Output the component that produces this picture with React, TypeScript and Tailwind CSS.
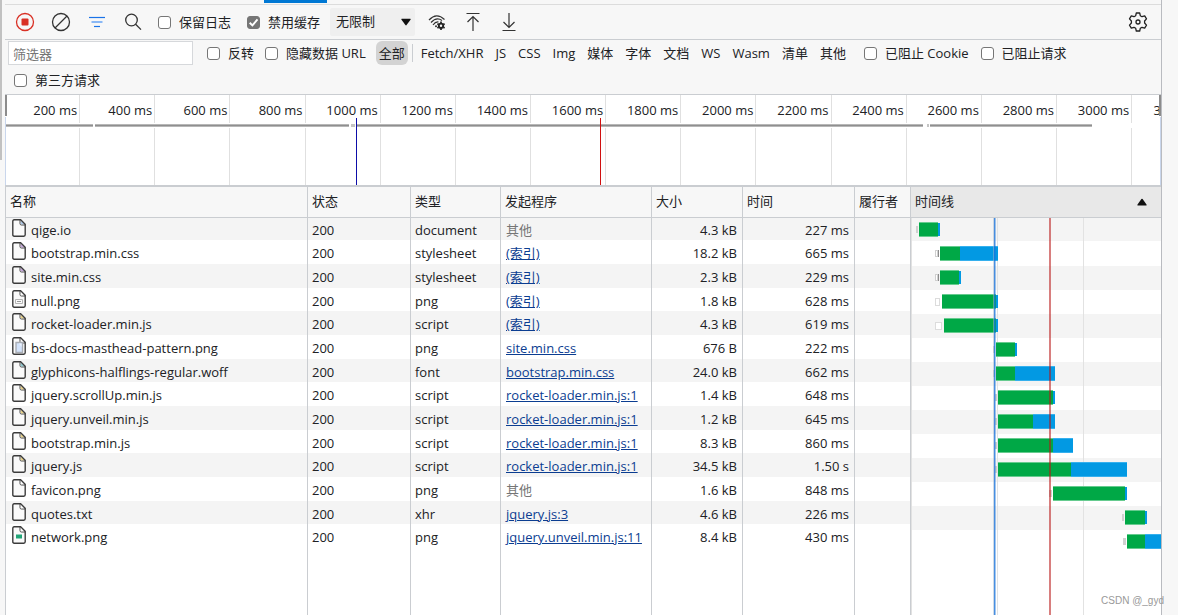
import type { ReactNode } from 'react';

type FileKind = 'document' | 'stylesheet' | 'script' | 'font' | 'other' | 'blank-image' | 'pattern-image' | 'chart-image';

interface NetworkRequest {
  name: string;
  icon: FileKind;
  type: string;
  initiator: string;
  size: string;
  time: string;
}

const requests: NetworkRequest[] = [
  { name: 'qige.io',                           icon: 'document',      type: 'document',   initiator: '其他',                   size: '4.3 kB',  time: '227 ms' },
  { name: 'bootstrap.min.css',                 icon: 'stylesheet',    type: 'stylesheet', initiator: '(索引)',                 size: '18.2 kB', time: '665 ms' },
  { name: 'site.min.css',                      icon: 'stylesheet',    type: 'stylesheet', initiator: '(索引)',                 size: '2.3 kB',  time: '229 ms' },
  { name: 'null.png',                          icon: 'blank-image',   type: 'png',        initiator: '(索引)',                 size: '1.8 kB',  time: '628 ms' },
  { name: 'rocket-loader.min.js',              icon: 'script',        type: 'script',     initiator: '(索引)',                 size: '4.3 kB',  time: '619 ms' },
  { name: 'bs-docs-masthead-pattern.png',      icon: 'pattern-image', type: 'png',        initiator: 'site.min.css',           size: '676 B',   time: '222 ms' },
  { name: 'glyphicons-halflings-regular.woff', icon: 'font',          type: 'font',       initiator: 'bootstrap.min.css',      size: '24.0 kB', time: '662 ms' },
  { name: 'jquery.scrollUp.min.js',            icon: 'script',        type: 'script',     initiator: 'rocket-loader.min.js:1', size: '1.4 kB',  time: '648 ms' },
  { name: 'jquery.unveil.min.js',              icon: 'script',        type: 'script',     initiator: 'rocket-loader.min.js:1', size: '1.2 kB',  time: '645 ms' },
  { name: 'bootstrap.min.js',                  icon: 'script',        type: 'script',     initiator: 'rocket-loader.min.js:1', size: '8.3 kB',  time: '860 ms' },
  { name: 'jquery.js',                         icon: 'script',        type: 'script',     initiator: 'rocket-loader.min.js:1', size: '34.5 kB', time: '1.50 s' },
  { name: 'favicon.png',                       icon: 'other',         type: 'png',        initiator: '其他',                   size: '1.6 kB',  time: '848 ms' },
  { name: 'quotes.txt',                        icon: 'other',         type: 'xhr',        initiator: 'jquery.js:3',            size: '4.6 kB',  time: '226 ms' },
  { name: 'network.png',                       icon: 'chart-image',   type: 'png',        initiator: 'jquery.unveil.min.js:11', size: '8.4 kB', time: '430 ms' },
];

// queue start, waiting start, download start, end
const bars = [
  [5, 8, 27, 29],
  [24, 29, 49, 87],
  [24, 29, 48, 50],
  [24, 31, 85, 87],
  [24, 33, 85, 87],
  [82, 85, 104, 106],
  [82, 85, 104, 144],
  [84, 87, 142, 144],
  [84, 87, 122, 144],
  [84, 87, 142, 162],
  [84, 87, 160, 216],
  [138, 142, 214, 216],
  [211, 214, 234, 236],
  [212, 216, 234, 250],
];

const ticks = [200, 400, 600, 800, 1000, 1200, 1400, 1600, 1800, 2000, 2200, 2400, 2600, 2800, 3000];

const filterTypes = ['Fetch/XHR', 'JS', 'CSS', 'Img', '媒体', '字体', '文档', 'WS', 'Wasm', '清单', '其他'];

const foldColors: Record<FileKind, string> = {
  document: '#7aa7dc',
  stylesheet: '#a36bc9',
  script: '#e0b93a',
  font: '#3fa9b5',
  other: '#ffffff',
  'blank-image': '#ffffff',
  'pattern-image': '#ffffff',
  'chart-image': '#ffffff',
};

function FileIcon({ kind }: { kind: FileKind }) {
  return (
    <svg width="14" height="18" viewBox="0 0 14 18" fill="none" className="shrink-0">
      <path d="M2.2.8H8.6L13.2 5.4V15.8Q13.2 17.2 11.8 17.2H2.2Q.8 17.2 .8 15.8V2.2Q.8.8 2.2.8Z" fill="#fafafa" stroke="#3c3c3c" strokeWidth="1.4" />
      <path d="M8 1V4.6Q8 6 9.4 6H13" stroke="#4a4a4a" strokeWidth="1" />
      <path d="M8.8 2V5.2H12Z" fill={foldColors[kind]} fillOpacity="0.6" />
      {kind === 'blank-image' && (
        <>
          <path d="M3.5 9.5H10.5V13.5H3.5Z" stroke="#b5b5b5" />
          <path d="M5 11.5H9" stroke="#999" />
        </>
      )}
      {kind === 'pattern-image' && (
        <>
          <path d="M4 5.5H10.5V15.5H4Z" fill="#d3e3fb" stroke="#a9adb4" strokeWidth="1.4" />
          <path d="M7 6.5L9.5 10V6.5Z" fill="#eef4fd" />
        </>
      )}
      {kind === 'chart-image' && <path d="M4 8.5H10V12.5H4Z" fill="#22a578" />}
    </svg>
  );
}

function IconButton({ label, width, children }: { label: string; width: string; children: ReactNode }) {
  return (
    <button type="button" aria-label={label} className={`flex h-7 shrink-0 items-center justify-center ${width}`}>
      {children}
    </button>
  );
}

function Checkbox({ label, checked = false }: { label: string; checked?: boolean }) {
  return (
    <label className="flex shrink-0 items-center gap-2 whitespace-nowrap">
      <span className="relative flex size-[13px]">
        <input
          type="checkbox"
          defaultChecked={checked}
          className="peer size-[13px] appearance-none rounded-[3px] border border-[#767676] bg-white checked:bg-[#767676]"
        />
        <svg viewBox="0 0 12 12" className="pointer-events-none absolute inset-0 hidden size-[13px] peer-checked:block" fill="none">
          <path d="M2.5 6.2L5 8.7L9.7 3.2" stroke="#fff" strokeWidth="1.8" />
        </svg>
      </span>
      <span className="pt-0.5">{label}</span>
    </label>
  );
}

function Toolbar() {
  return (
    <div className="flex h-[35px] items-center border-b border-[#cacdd1] pr-3 pl-0.5">
      <IconButton label="停止记录" width="w-9">
        <svg width="20" height="20" viewBox="0 0 20 20" fill="none">
          <circle cx="10" cy="10" r="8.5" stroke="#d93025" strokeWidth="1.3" />
          <rect x="6.5" y="6.5" width="7" height="7" rx="1" fill="#d93025" />
        </svg>
      </IconButton>
      <IconButton label="清除" width="w-9">
        <svg width="20" height="20" viewBox="0 0 20 20" fill="none" stroke="#333" strokeWidth="1.3">
          <circle cx="10" cy="10" r="8.5" />
          <path d="M4 16L16 4" />
        </svg>
      </IconButton>
      <IconButton label="筛选" width="w-9">
        <svg width="18" height="14" viewBox="0 0 18 14" fill="none">
          <path d="M1 2.5H17" stroke="#1a73e8" strokeWidth="1.2" />
          <path d="M3.5 7H14.5" stroke="#8ab8f5" strokeWidth="2" />
          <path d="M6 11.5H12" stroke="#1a73e8" strokeWidth="1.2" />
        </svg>
      </IconButton>
      <IconButton label="搜索" width="w-9">
        <svg width="18" height="18" viewBox="0 0 18 18" fill="none" stroke="#333" strokeWidth="1.3">
          <circle cx="7.5" cy="7" r="5.8" />
          <path d="M11.6 11.2L17 16.6" />
        </svg>
      </IconButton>
      <div className="flex items-center gap-4 pl-[7px]">
        <Checkbox label="保留日志" />
        <Checkbox label="禁用缓存" checked />
      </div>
      <div className="relative ml-2.5">
        <select aria-label="网络限制" className="h-7 w-[85px] appearance-none rounded-xs bg-[#efefef] pr-6 pl-1.5">
          <option>无限制</option>
        </select>
        <svg width="10" height="8" viewBox="0 0 10 8" className="pointer-events-none absolute top-2.5 right-1">
          <path d="M.8.8H9.2Q10 .8 9.5 1.7L5.6 7Q5 7.8 4.4 7L.5 1.7Q0 .8 .8.8Z" fill="#111" />
        </svg>
      </div>
      <div className="flex items-center pl-1">
        <IconButton label="网络条件" width="w-9">
          <svg width="18" height="18" viewBox="0 0 18 18" fill="none" stroke="#333" strokeWidth="1.2">
            <path d="M1 7Q8.5 -1 16.5 6.5" />
            <path d="M3 9.5Q8.5 3.5 14 7.5" />
            <path d="M5 12Q7.5 8.5 10.5 9" />
            <circle cx="8" cy="13.3" r="1" fill="#333" stroke="none" />
            <circle cx="13" cy="12.8" r="2.2" strokeWidth="1.9" stroke="#222" />
            <path d="M13 8.6V10M13 15.6V17M9.4 10.7L10.6 11.4M15.4 14.2L16.6 14.9M16.6 10.7L15.4 11.4M10.6 14.2L9.4 14.9" strokeWidth="1.7" stroke="#222" />
          </svg>
        </IconButton>
        <IconButton label="导入 HAR 文件" width="w-9">
          <svg width="16" height="20" viewBox="0 0 16 20" fill="none" stroke="#333" strokeWidth="1.2">
            <path d="M1.5 1.5H14.5M8 19V4.5M2.5 10L8 4.5L13.5 10" />
          </svg>
        </IconButton>
        <IconButton label="导出 HAR" width="w-9">
          <svg width="16" height="20" viewBox="0 0 16 20" fill="none" stroke="#333" strokeWidth="1.2">
            <path d="M1.5 18.5H14.5M8 1V15.5M2.5 10L8 15.5L13.5 10" />
          </svg>
        </IconButton>
      </div>
      <div className="ml-auto">
        <IconButton label="网络设置" width="w-[22px]">
          <svg width="20" height="20" viewBox="0 0 20 20" fill="none" stroke="#222" strokeWidth="1.3" strokeLinejoin="round">
            <path d="M8.3 1H11.7L12.3 3.7L14 4.7L16.7 3.9L18.5 6.9L16.6 9V11L18.5 13.1L16.7 16.1L14 15.3L12.3 16.3L11.7 19H8.3L7.7 16.3L6 15.3L3.3 16.1L1.5 13.1L3.4 11V9L1.5 6.9L3.3 3.9L6 4.7L7.7 3.7Z" />
            <circle cx="10" cy="10" r="2" />
          </svg>
        </IconButton>
      </div>
    </div>
  );
}

function FilterBar() {
  return (
    <div className="flex min-h-[54px] flex-wrap items-center gap-x-3 px-[3px]">
      <input
        type="text"
        aria-label="筛选器"
        placeholder="筛选器"
        className="h-6 w-[185px] border border-[#d6d8db] bg-white px-1 pt-0.5 placeholder:text-[#757575]"
      />
      <div className="flex items-center gap-[11px] pl-0.5">
        <Checkbox label="反转" />
        <Checkbox label="隐藏数据 URL" />
      </div>
      <div className="flex items-center">
        <button type="button" className="-ml-0.5 h-6 rounded-md bg-[#d3d3d3] px-[3px] pt-0.5">全部</button>
        <span className="mr-0.5 ml-1 h-[18px] w-px bg-[#cacdd1]" />
        {filterTypes.map(t => (
          <button key={t} type="button" className="h-6 px-1.5 pt-0.5">{t}</button>
        ))}
      </div>
      <Checkbox label="已阻止 Cookie" />
      <Checkbox label="已阻止请求" />
      <div className="flex h-[26px] basis-full items-center pl-1.5">
        <Checkbox label="第三方请求" />
      </div>
    </div>
  );
}

function Overview() {
  return (
    <div className="relative flex h-[93px] shrink-0 overflow-hidden border-t border-b-2 border-[#cacdd1] bg-white leading-[18px] whitespace-nowrap">
      {ticks.map(t => (
        <div key={t} className="min-w-0 flex-[13]">
          <div className="h-full border-r border-[#e0e0e0] pt-1.5 pr-0.5 text-right">{t} ms</div>
        </div>
      ))}
      <div className="min-w-0 flex-[5] pt-1.5 text-right">3</div>
      <svg viewBox="0 0 1156 90" preserveAspectRatio="none" className="absolute inset-0 size-full">
        <rect y="28" width="1156" height="5" fill="#fff" />
        <path d="M0 30.5H88M90 30.5H344M346 30.5H350M352 30.5H918M922 30.5H924M925 30.5H1087" stroke="#c4c4c4" strokeWidth="3" />
        <path d="M0 30.5H88M90 30.5H344M352 30.5H918M925 30.5H1087" stroke="#8f8f8f" strokeWidth="1.6" />
        <rect width="2" height="21" fill="#8c8c8c" />
        <rect x="1154" width="2" height="21" fill="#8c8c8c" />
        <path d="M.5 22V90M1155.5 22V90" stroke="#c9d6ec" />
        <rect x="351" y="23" width="1" height="67" fill="#0d0da8" />
        <rect x="595" y="23" width="1" height="67" fill="#d01010" />
      </svg>
    </div>
  );
}

function RequestTable() {
  return (
    <table className="h-full flex-1 table-fixed border-collapse">
      <colgroup>
        <col />
        <col className="w-[103px]" />
        <col className="w-[90px]" />
        <col className="w-[151px]" />
        <col className="w-[91px]" />
        <col className="w-[112px]" />
        <col className="w-[56px]" />
      </colgroup>
      <thead>
        <tr className="h-[30px] border-b border-[#cacdd1] bg-[#f7f7f7] text-left">
          {['名称', '状态', '类型', '发起程序', '大小', '时间', '履行者'].map(h => (
            <th key={h} scope="col" className="border-r border-[#cacdd1] py-0 pr-0 pl-1 font-normal whitespace-nowrap">{h}</th>
          ))}
        </tr>
      </thead>
      <tbody>
        {requests.map(r => (
          <tr key={r.name} className="h-6 leading-[18px] whitespace-nowrap odd:bg-[#f4f4f4] nth-[3n+1]:h-[23px]">
            <td className="border-r border-[#cacdd1] p-0 pl-1.5">
              <div className="flex items-start gap-[5px]">
                <FileIcon kind={r.icon} />
                <span className="pt-0.5">{r.name}</span>
              </div>
            </td>
            <td className="border-r border-[#cacdd1] p-0 pt-0.5 pl-1">200</td>
            <td className="border-r border-[#cacdd1] p-0 pt-0.5 pl-1">{r.type}</td>
            <td className="border-r border-[#cacdd1] p-0 pt-0.5 pl-[5px]">
              {r.initiator === '其他'
                ? <span className="text-[#757575]">{r.initiator}</span>
                : <a href="#" className="text-[#0b3d91] underline">{r.initiator}</a>
              }
            </td>
            <td className="border-r border-[#cacdd1] p-0 pt-0.5 pr-[5px] text-right">{r.size}</td>
            <td className="border-r border-[#cacdd1] p-0 pt-0.5 pr-[5px] text-right">{r.time}</td>
            <td className="border-r border-[#cacdd1] p-0" />
          </tr>
        ))}
        {/* takes up whatever height is left so the column rules reach the bottom */}
        <tr>
          {[0, 1, 2, 3, 4, 5, 6].map(i => <td key={i} className="border-r border-[#cacdd1] p-0" />)}
        </tr>
      </tbody>
    </table>
  );
}

function Waterfall() {
  return (
    <div className="flex w-[250px] shrink-0 flex-col">
      <button type="button" className="flex h-[31px] shrink-0 items-center justify-between border-b border-[#cacdd1] bg-[#e8e8e8] pr-3.5 pl-1">
        时间线
        <svg width="10" height="8" viewBox="0 0 10 8">
          <path d="M.8 7.5H9.2Q10 7.5 9.5 6.6L5.6 1Q5 .3 4.4 1L.5 6.6Q0 7.5 .8 7.5Z" fill="#111" />
        </svg>
      </button>
      <svg className="w-full flex-1 overflow-hidden">
        {bars.map((_, i) => i % 2 === 0 && <rect key={i} y={i * 24} width="100%" height={i === 0 ? 23 : 24} fill="#f4f4f4" />)}
        <path d="M.5 0V2000M86.5 0V2000M172.5 0V2000" stroke="#e2e2e2" />
        {bars.map(([queued, waiting, download, end], i) => {
          const y = i * 24 + 4;
          return (
            <g key={i}>
              {waiting - queued > 5
                ? <rect x={queued + 0.5} y={y + 4.5} width={waiting - queued - 3} height="7" fill="#fff" stroke="#dcdcdc" />
                : <rect x={queued} y={y + 4} width={waiting - queued - 1} height="7" fill="#d0d0d0" />
              }
              {waiting - queued === 5 && (
                <>
                  <rect x={queued + 1} y={y + 5} width="1" height="5" fill="#fff" />
                  <rect x={queued + 3} y={y + 4} width="1" height="7" fill="#8c8c8c" />
                </>
              )}
              <rect x={waiting} y={y} width={download - waiting} height="15" fill="#66cb8f" />
              <rect x={waiting} y={y + 1} width={download - waiting} height="13" fill="#00a846" />
              <rect x={download} y={y + (end - download > 3 ? 0 : 1)} width={end - download} height={end - download > 3 ? 15 : 13} fill="#35b0ee" />
              <rect x={download} y={y + 1} width={end - download} height="13" fill="#0299e3" />
            </g>
          );
        })}
        <rect x="82" width="1" height="100%" fill="#9fb4cc" opacity="0.5" />
        <rect x="83" width="1.5" height="100%" fill="#1a73d9" opacity="0.8" />
        <rect x="138" width="2" height="100%" fill="#b81414" opacity="0.55" />
      </svg>
    </div>
  );
}

export default function App() {
  return (
    <div className="relative flex h-screen overflow-hidden bg-[#f7f7f7] font-['Open_Sans','Noto_Sans_CJK_SC',sans-serif] text-[13px] text-[#202124]">
      <div className="mr-[3px] h-40 w-0.5 shrink-0 bg-[#c1c1c1]" />
      <div className="flex min-w-0 flex-1 flex-col border-r border-[#b9bbc0]">
        <div className="h-[5px] shrink-0 border-b border-[#dcdcdc] pl-[259px]">
          <div className="h-[3px] w-[63px] bg-[#0078d4]" />
        </div>
        <Toolbar />
        <FilterBar />
        <div className="flex min-h-0 flex-1 flex-col">
          <Overview />
          <div className="flex min-h-0 flex-1 border-l border-[#cacdd1] bg-white">
            <RequestTable />
            <Waterfall />
          </div>
        </div>
      </div>
      <div className="w-4 shrink-0" />
      <span className="absolute right-3.5 bottom-2 font-['Liberation_Sans',sans-serif] text-[10px] leading-3 text-[#999]">CSDN @_gyd</span>
    </div>
  );
}
